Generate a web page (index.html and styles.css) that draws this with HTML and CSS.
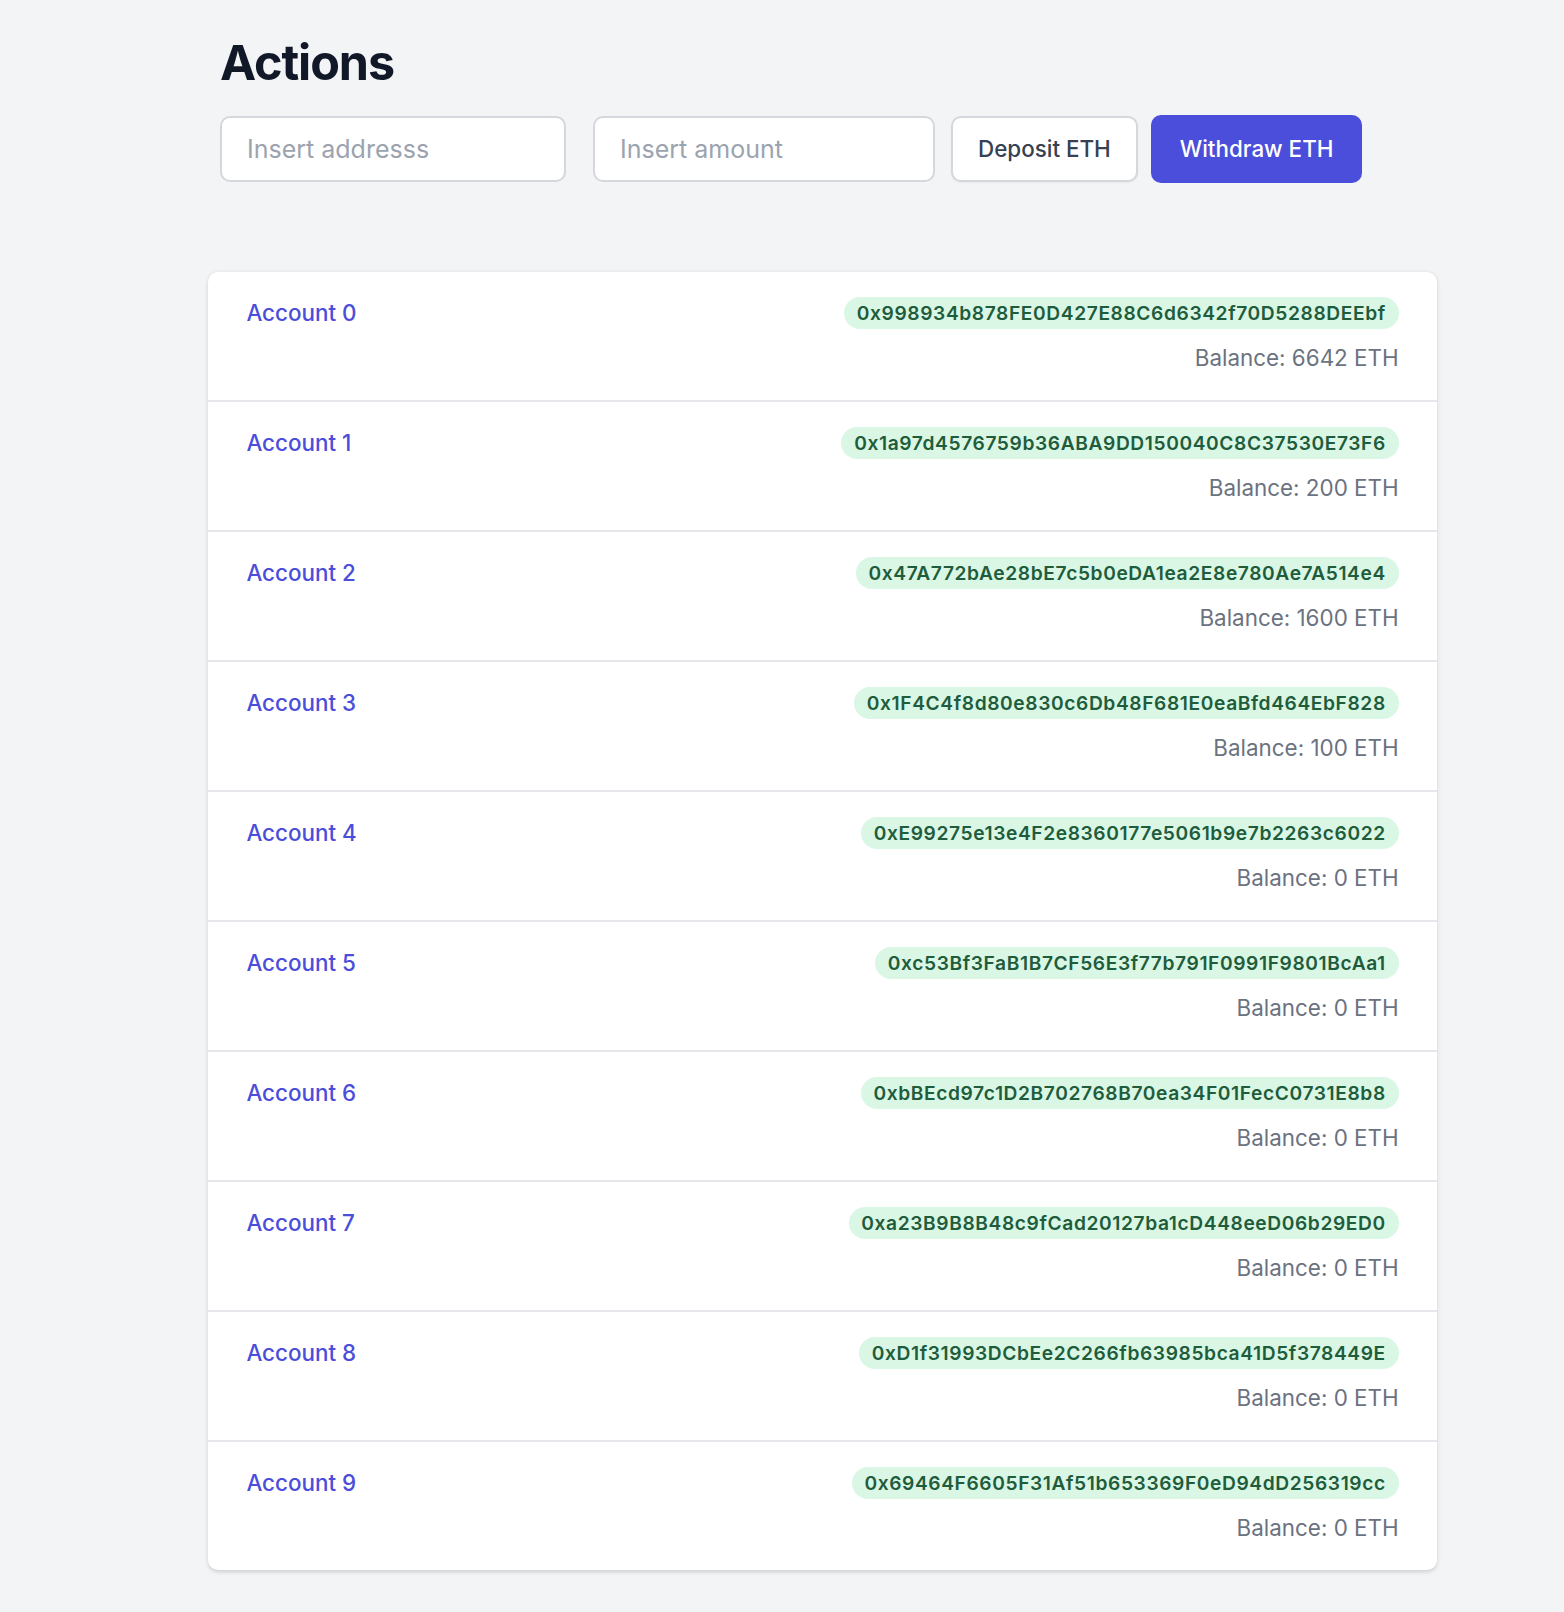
FILE: index.html
```html
<!DOCTYPE html>
<html lang="en">
<head>
<meta charset="utf-8">
<title>Actions</title>
<link rel="stylesheet" href="styles.css">
</head>
<body>
<main class="page">
  <section class="actions">
    <h1 class="title">Actions</h1>
    <div class="controls">
      <input class="field field-address" type="text" placeholder="Insert addresss">
      <input class="field field-amount" type="text" placeholder="Insert amount">
      <button class="btn btn-secondary" type="button">Deposit ETH</button>
      <button class="btn btn-primary" type="button">Withdraw ETH</button>
    </div>
  </section>

  <ul class="accounts">
    <li class="account">
      <div class="account-top"><span class="account-name">Account 0</span><span class="address">0x998934b878FE0D427E88C6d6342f70D5288DEEbf</span></div>
      <div class="account-bottom"><span class="balance">Balance: 6642 ETH</span></div>
    </li>
    <li class="account">
      <div class="account-top"><span class="account-name">Account 1</span><span class="address">0x1a97d4576759b36ABA9DD150040C8C37530E73F6</span></div>
      <div class="account-bottom"><span class="balance">Balance: 200 ETH</span></div>
    </li>
    <li class="account">
      <div class="account-top"><span class="account-name">Account 2</span><span class="address">0x47A772bAe28bE7c5b0eDA1ea2E8e780Ae7A514e4</span></div>
      <div class="account-bottom"><span class="balance">Balance: 1600 ETH</span></div>
    </li>
    <li class="account">
      <div class="account-top"><span class="account-name">Account 3</span><span class="address">0x1F4C4f8d80e830c6Db48F681E0eaBfd464EbF828</span></div>
      <div class="account-bottom"><span class="balance">Balance: 100 ETH</span></div>
    </li>
    <li class="account">
      <div class="account-top"><span class="account-name">Account 4</span><span class="address">0xE99275e13e4F2e8360177e5061b9e7b2263c6022</span></div>
      <div class="account-bottom"><span class="balance">Balance: 0 ETH</span></div>
    </li>
    <li class="account">
      <div class="account-top"><span class="account-name">Account 5</span><span class="address">0xc53Bf3FaB1B7CF56E3f77b791F0991F9801BcAa1</span></div>
      <div class="account-bottom"><span class="balance">Balance: 0 ETH</span></div>
    </li>
    <li class="account">
      <div class="account-top"><span class="account-name">Account 6</span><span class="address">0xbBEcd97c1D2B702768B70ea34F01FecC0731E8b8</span></div>
      <div class="account-bottom"><span class="balance">Balance: 0 ETH</span></div>
    </li>
    <li class="account">
      <div class="account-top"><span class="account-name">Account 7</span><span class="address">0xa23B9B8B48c9fCad20127ba1cD448eeD06b29ED0</span></div>
      <div class="account-bottom"><span class="balance">Balance: 0 ETH</span></div>
    </li>
    <li class="account">
      <div class="account-top"><span class="account-name">Account 8</span><span class="address">0xD1f31993DCbEe2C266fb63985bca41D5f378449E</span></div>
      <div class="account-bottom"><span class="balance">Balance: 0 ETH</span></div>
    </li>
    <li class="account">
      <div class="account-top"><span class="account-name">Account 9</span><span class="address">0x69464F6605F31Af51b653369F0eD94dD256319cc</span></div>
      <div class="account-bottom"><span class="balance">Balance: 0 ETH</span></div>
    </li>
  </ul>
</main>
</body>
</html>
```

FILE: styles.css
```css
* {
  box-sizing: border-box;
}

html, body {
  margin: 0;
  padding: 0;
}

body {
  background: #f3f4f6;
  font-family: Inter, "Noto Sans", "Liberation Sans", sans-serif;
  color: #111827;
  min-height: 1612px;
}

.page {
  padding-top: 34px;
}

.actions {
  margin-left: 220px;
}

.title {
  margin: 0;
  font-size: 48.5px;
  line-height: 1.2;
  font-weight: 700;
  color: #111827;
  letter-spacing: -1.1px;
}

.controls {
  display: flex;
  align-items: center;
  margin-top: 22.5px;
}

.field {
  height: 66px;
  border: 2px solid #d5d7dc;
  border-radius: 10px;
  background: #fff;
  padding: 0 25px;
  font-family: Inter, "Noto Sans", "Liberation Sans", sans-serif;
  font-size: 25px;
  color: #111827;
  outline: none;
}

.field::placeholder {
  color: #9ca3af;
}

.field-address {
  width: 346px;
}

.field-amount {
  width: 342px;
  margin-left: 27px;
}

.btn {
  font-family: Inter, "Noto Sans", "Liberation Sans", sans-serif;
  font-size: 22.4px;
  font-weight: 500;
  border-radius: 10px;
  cursor: pointer;
}

.btn-secondary {
  height: 66px;
  margin-left: 16px;
  padding: 0 25px;
  background: #fff;
  color: #374151;
  border: 2px solid #d5d7dc;
  box-shadow: 0 1px 2px rgba(0, 0, 0, 0.05);
}

.btn-primary {
  height: 68px;
  margin-left: 13px;
  padding: 0 29px;
  background: #4b4ddb;
  color: #fff;
  border: none;
}

.accounts {
  list-style: none;
  margin: 89px 0 0 208px;
  padding: 0;
  width: 1229px;
  background: #fff;
  border-radius: 10px;
  box-shadow: 0 1.6px 4.8px rgba(0, 0, 0, 0.1), 0 1.6px 3.2px rgba(0, 0, 0, 0.06);
  overflow: hidden;
}

.account {
  padding: 25.6px 38.4px;
  border-top: 2px solid #e6e7eb;
}

.account:first-child {
  border-top: none;
}

.account-top {
  display: flex;
  align-items: center;
  justify-content: space-between;
  height: 32px;
}

.account-name {
  font-size: 22.4px;
  line-height: 32px;
  font-weight: 500;
  color: #4b4ddb;
}

.address {
  display: inline-flex;
  padding: 0 12.8px;
  font-size: 19.2px;
  line-height: 32px;
  font-weight: 600;
  letter-spacing: 0.6px;
  color: #1f5c3c;
  background: #d9f7e4;
  border-radius: 999px;
}

.account-bottom {
  display: flex;
  justify-content: flex-end;
  margin-top: 12.8px;
}

.balance {
  font-size: 22.4px;
  line-height: 32px;
  color: #6b7280;
}
```
